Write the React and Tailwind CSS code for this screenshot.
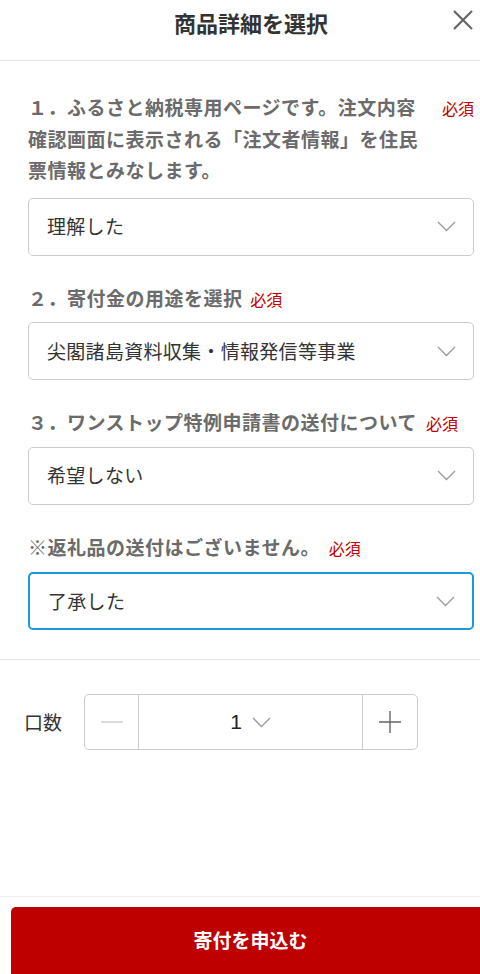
import React from "react";

const font = { fontFamily: '"Noto Sans CJK JP", "Noto Sans", sans-serif' };

function Chevron({ className = "" }) {
    return (
        <svg className={className} width="19" height="11" viewBox="0 0 19 11" fill="none">
            <path d="M1 1l8.5 8.5L18 1" stroke="#9a9a9a" strokeWidth="1.3" />
        </svg>
    );
}

// Required badge
function Required({ className = "" }) {
    return (
        <span className={`text-[16px] leading-none font-normal tracking-normal text-[#bf0000] whitespace-nowrap ${className}`}>
            必須
        </span>
    );
}

function SelectBox({ value, focused }) {
    return (
        <div
            className={`flex items-center justify-between h-[58px] rounded-[5px] bg-white pl-[18px] pr-[17px] ${
                focused ? "border-2 border-[#1a9ad6]" : "border border-[#cccccc]"
            }`}
        >
            <span className="text-[19px] text-[#333333] tracking-[0.3px]">{value}</span>
            <Chevron />
        </div>
    );
}

const labelCls = "text-[19px] leading-[31.5px] font-bold text-[#6b6b6b] tracking-[0.5px]";

export default function App() {
    return (
        <div className="min-h-screen flex flex-col bg-white overflow-hidden" style={font}>
            {/* Header */}
            <div className="relative h-[61px] border-b border-[#e6e6e6]">
                <h1 className="pt-[6px] pl-[22px] text-center text-[22px] leading-[32px] font-bold text-[#333333]">
                    商品詳細を選択
                </h1>
                <button className="absolute right-[5px] top-[8px] p-[1px]">
                    <svg width="22" height="22" viewBox="0 0 22 22" fill="none">
                        <path d="M2 2l18 18M20 2L2 20" stroke="#666666" strokeWidth="2.2" />
                    </svg>
                </button>
            </div>

            {/* Options */}
            <div className="pl-[28px] pr-[6px] pt-[30px] pb-[29px] border-b border-[#e6e6e6]">
                <div className="flex items-start justify-between mb-[12px]">
                    <p className={`w-[402px] ${labelCls}`}>
                        １．ふるさと納税専用ページです。注文内容確認画面に表示される「注文者情報」を住民票情報とみなします。
                    </p>
                    <Required className="mt-[9px] shrink-0" />
                </div>
                <SelectBox value="理解した" />

                <div className={`mt-[26px] mb-[9px] ${labelCls}`}>
                    ２．寄付金の用途を選択 <Required className="ml-[3px]" />
                </div>
                <SelectBox value="尖閣諸島資料収集・情報発信等事業" />

                <div className={`mt-[26px] mb-[9px] whitespace-nowrap ${labelCls}`}>
                    ３．ワンストップ特例申請書の送付について <Required className="ml-[4px]" />
                </div>
                <SelectBox value="希望しない" />

                <div className={`mt-[26px] mb-[10px] ${labelCls}`}>
                    ※返礼品の送付はございません。 <Required className="ml-[4px]" />
                </div>
                <SelectBox value="了承した" focused />
            </div>

            {/* Quantity */}
            <div className="flex items-center pl-[24px] pt-[34px]">
                <span className="w-[60px] text-[19px] text-[#333333]">口数</span>
                <div className="flex h-[56px] w-[334px] rounded-[5px] border border-[#cccccc]">
                    <div className="flex w-[54px] items-center justify-center border-r border-[#cccccc]">
                        <svg width="22" height="2" viewBox="0 0 22 2">
                            <path d="M0 1h22" stroke="#cccccc" strokeWidth="1.4" />
                        </svg>
                    </div>
                    <div className="flex flex-1 items-center justify-center gap-[10px] border-r border-[#cccccc]">
                        <span className="text-[21px] text-[#222222]" style={{ fontFamily: '"Liberation Sans", sans-serif' }}>
                            1
                        </span>
                        <Chevron />
                    </div>
                    <div className="flex w-[54px] items-center justify-center">
                        <svg width="22" height="22" viewBox="0 0 22 22">
                            <path d="M0 11h22M11 0v22" stroke="#666666" strokeWidth="1.4" />
                        </svg>
                    </div>
                </div>
            </div>

            {/* Footer */}
            <div className="mt-auto border-t border-[#f0f0f0] pt-[10px] pl-[11px]">
                <button className="flex h-[67px] w-[479px] items-center justify-center rounded-t-[5px] bg-[#bf0000] text-[19px] font-bold text-white">
                    寄付を申込む
                </button>
            </div>
        </div>
    );
}
